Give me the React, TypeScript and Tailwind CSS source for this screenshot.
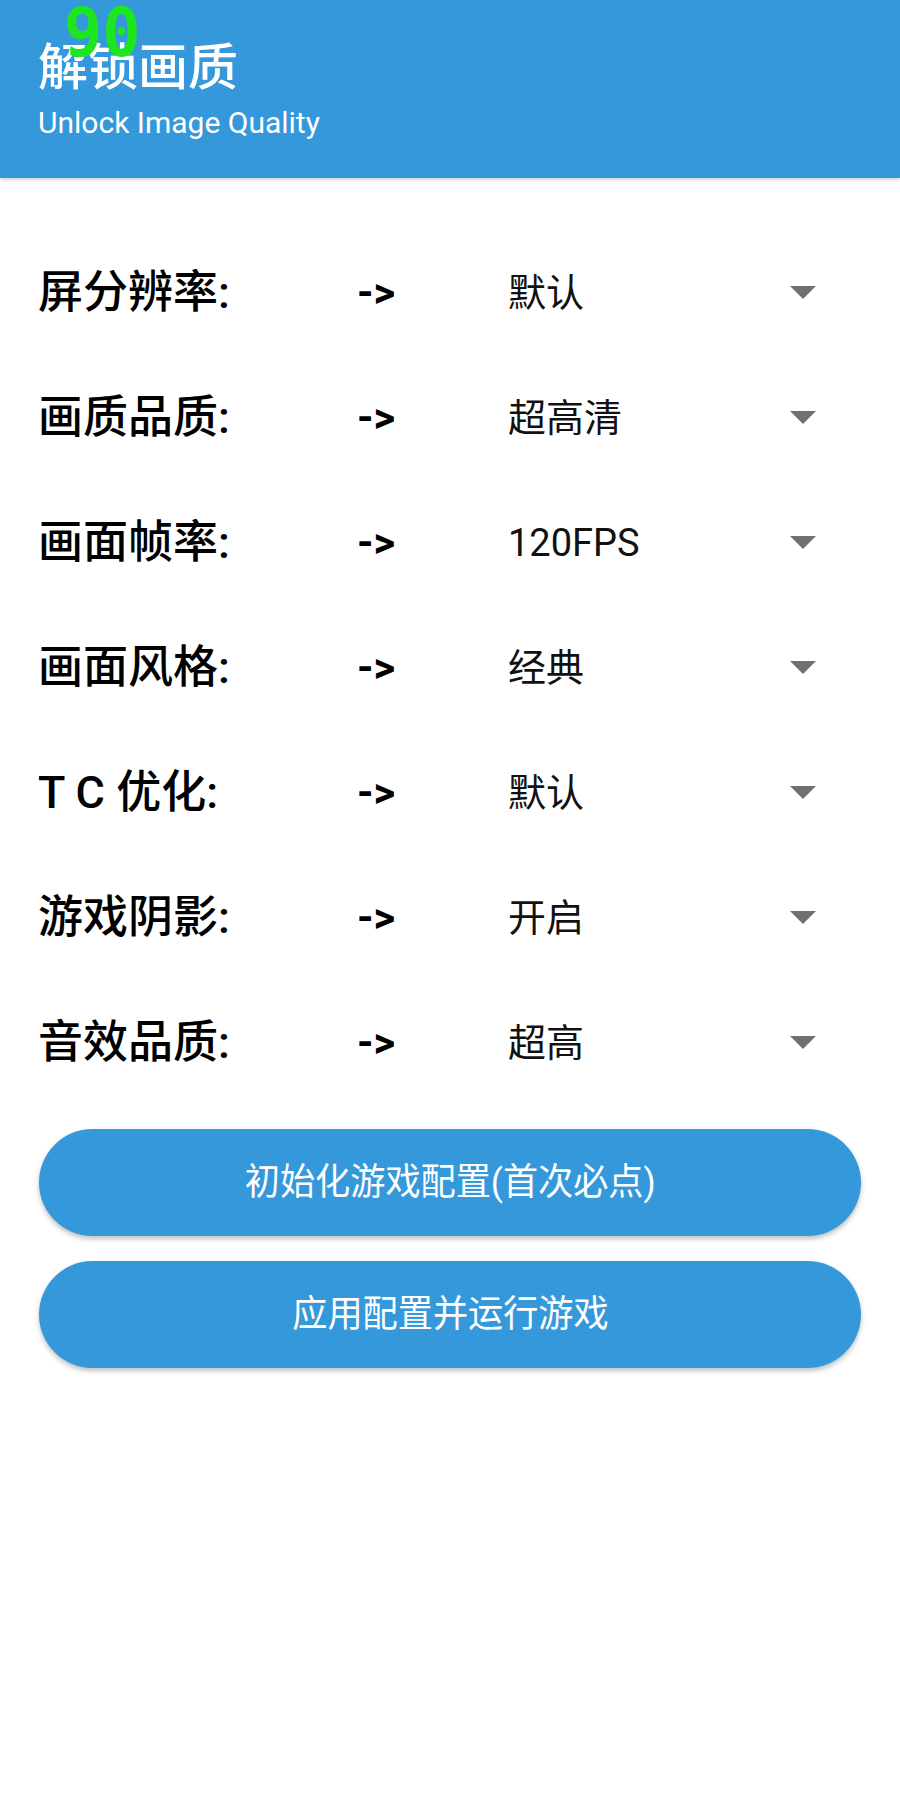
import React from "react";

const rows: { label: string; value: string }[] = [
  { label: "屏分辨率:", value: "默认" },
  { label: "画质品质:", value: "超高清" },
  { label: "画面帧率:", value: "120FPS" },
  { label: "画面风格:", value: "经典" },
  { label: "T C 优化:", value: "默认" },
  { label: "游戏阴影:", value: "开启" },
  { label: "音效品质:", value: "超高" },
];

const CJK = "font-['Roboto','Noto_Sans_CJK_SC',sans-serif]";

export default function App() {
  return (
    <div className={`relative w-[900px] min-h-[1800px] bg-white ${CJK}`}>
      <header className="relative z-10 h-[178px] bg-[#3598db] pl-[38px] pt-[38px] shadow-[0_2px_4px_rgba(0,0,0,0.18)]">
        <div className="text-[50px] font-medium leading-[60px] text-white">解锁画质</div>
        <div className="mt-[8px] text-[30px] leading-[34px] text-white">Unlock Image Quality</div>
      </header>

      <div className="absolute left-[64px] top-[0px] z-20 origin-left scale-x-[0.95] font-['DejaVu_Sans_Mono',monospace] text-[67px] font-bold leading-[67px] text-[#1ee61e]">
        90
      </div>

      <main className="pt-[52px]">
        {rows.map((r, i) => (
          <div key={i} className="flex h-[125px] items-center pl-[38px]">
            <div className="w-[319px] text-[45px] font-medium leading-none text-black">{r.label}</div>
            <div className="w-[151px] font-['Roboto',sans-serif] text-[42px] font-bold leading-none text-black">
              -&gt;
            </div>
            <div className="flex-1 text-[38px] leading-none text-[#111]">{r.value}</div>
            <svg width="26" height="13" viewBox="0 0 26 13" className="mr-[84px]">
              <polygon points="0,0 26,0 13,13" fill="#707070" />
            </svg>
          </div>
        ))}

        <div className="mt-[24px] flex flex-col gap-[25px] px-[39px]">
          <button className="flex h-[107px] items-center justify-center rounded-full bg-[#3598db] shadow-[0_3px_5px_rgba(0,0,0,0.25)]">
            <span className="scale-x-[0.95] text-[37px] text-white">初始化游戏配置(首次必点)</span>
          </button>
          <button className="flex h-[107px] items-center justify-center rounded-full bg-[#3598db] shadow-[0_3px_5px_rgba(0,0,0,0.25)]">
            <span className="scale-x-[0.95] text-[37px] text-white">应用配置并运行游戏</span>
          </button>
        </div>
      </main>
    </div>
  );
}
